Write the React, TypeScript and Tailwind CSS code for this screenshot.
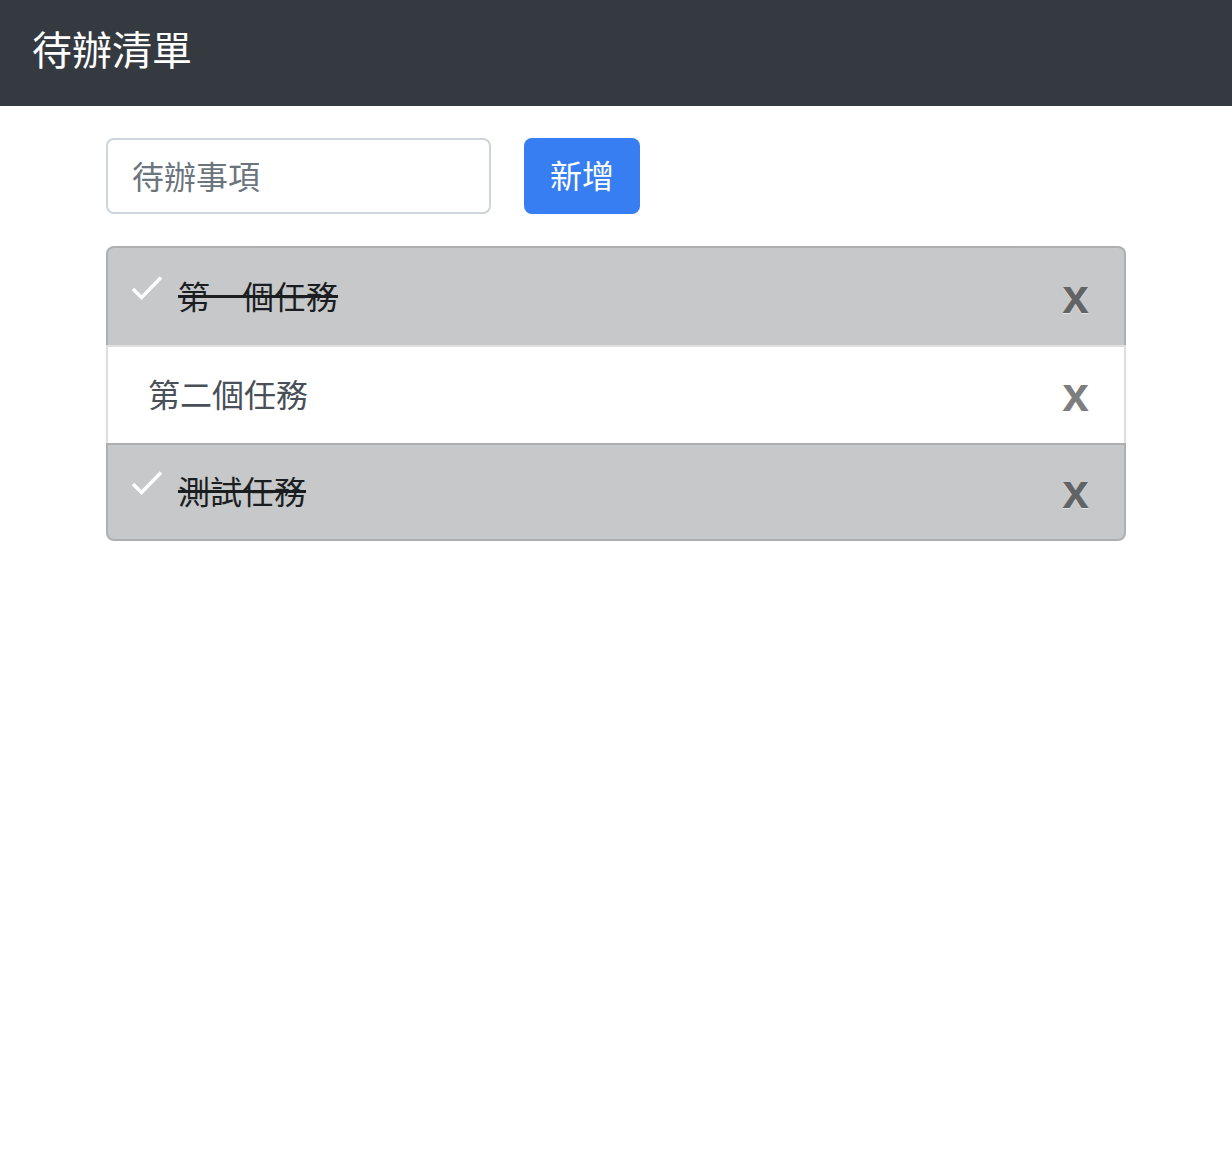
import { useState } from 'react';

type Todo = { id: number; text: string; done: boolean };

const initial: Todo[] = [
  { id: 1, text: '第一個任務', done: true },
  { id: 2, text: '第二個任務', done: false },
  { id: 3, text: '測試任務', done: true },
];

function Check() {
  return (
    <svg width="32" height="26" viewBox="0 0 32 26" className="mb-[18px] shrink-0" fill="none">
      <path d="M2 14 L10.5 22.5 L30 2.5" stroke="#fff" strokeWidth="3.4" strokeLinecap="butt" />
    </svg>
  );
}

export default function App() {
  const [todos, setTodos] = useState<Todo[]>(initial);
  const [text, setText] = useState('');

  function add() {
    if (!text.trim()) return;
    setTodos([...todos, { id: Date.now(), text: text.trim(), done: false }]);
    setText('');
  }

  return (
    <div className="min-h-[1164px] bg-white" style={{ fontFamily: '"Noto Sans CJK TC", "Noto Sans", sans-serif' }}>
      <nav className="h-[106px] bg-[#343a40] flex items-center px-[32px]">
        <span className="text-white text-[40px] leading-none pb-[10px]">待辦清單</span>
      </nav>

      <div className="w-[1020px] ml-[106px] pt-[32px]">
        <div className="flex gap-[33px]">
          <input
            value={text}
            onChange={(e) => setText(e.target.value)}
            placeholder="待辦事項"
            className="w-[385px] h-[76px] border-2 border-[#ced4da] rounded-[8px] px-[24px] pb-[2px] text-[32px] text-[#495057] placeholder:text-[#6c757d] outline-none"
          />
          <button
            onClick={add}
            className="w-[116px] h-[76px] rounded-[8px] bg-[#387ef3] text-white text-[32px] pb-[4px]"
          >
            新增
          </button>
        </div>

        <ul className="mt-[32px]">
          {todos.map((t, i) => {
            const first = i === 0;
            const last = i === todos.length - 1;
            return (
              <li
                key={t.id}
                onClick={() => setTodos(todos.map((x) => (x.id === t.id ? { ...x, done: !x.done } : x)))}
                className={`flex items-center border-x-2 border-t-2 border-[rgba(0,0,0,0.125)] pr-[35px] cursor-pointer ${
                  t.done ? 'bg-[#c6c8ca] text-[#1b1e21] pl-[23px]' : 'bg-white text-[#495057] pl-[40px]'
                } ${first ? 'rounded-t-[8px] h-[99px]' : 'h-[98px]'} ${last ? 'border-b-2 rounded-b-[8px]' : ''}`}
              >
                {t.done && <Check />}
                <span className={`text-[32px] pb-[4px] ${t.done ? 'line-through ml-[15px]' : ''}`}>{t.text}</span>
                <button
                  onClick={(e) => {
                    e.stopPropagation();
                    setTodos(todos.filter((x) => x.id !== t.id));
                  }}
                  className="ml-auto text-black opacity-50 font-bold text-[48px] leading-none [text-shadow:0_1px_0_#fff]"
                  style={{ fontFamily: '"Liberation Sans", Arial, sans-serif' }}
                >
                  x
                </button>
              </li>
            );
          })}
        </ul>
      </div>
    </div>
  );
}
